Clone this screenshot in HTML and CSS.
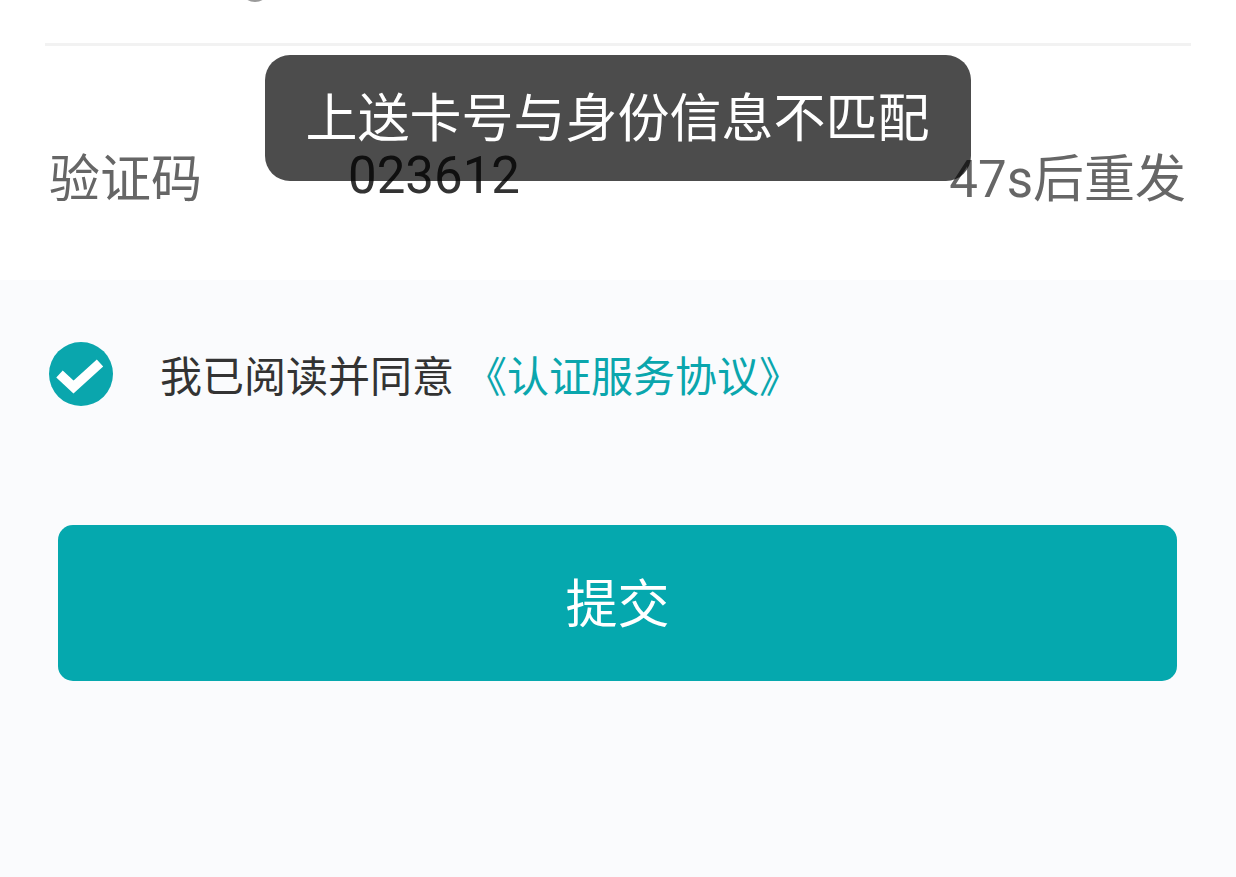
FILE: index.html
```html
<!DOCTYPE html>
<html lang="zh-CN">
<head>
  <meta charset="UTF-8">
  <meta name="viewport" content="width=device-width, initial-scale=1">
  <title>认证</title>
  <link rel="stylesheet" href="styles.css">
</head>
<body>
  <div class="top-box">
    <!-- Row above, scrolled almost out of view -->
    <div class="prev-row"><span class="prev-mark"></span></div>
    <div class="code-row">
      <span class="code-label">验证码</span>
      <span class="code-value">023612</span>
      <span class="code-timer">47s后重发</span>
    </div>
  </div>

  <div class="bottom-box">
    <div class="agree-row">
      <svg class="check-icon" viewBox="0 0 64 64" width="64" height="64">
        <circle cx="32" cy="32" r="32" fill="#0aa6ad"/>
        <path d="M10.5 32 L24.5 45 L51 21" fill="none" stroke="#fff" stroke-width="9.5"/>
      </svg>
      <span class="agree-text">我已阅读并同意</span>
      <span class="agree-link">《认证服务协议》</span>
    </div>
    <button type="button" class="submit-btn">提交</button>
  </div>

  <div class="toast">上送卡号与身份信息不匹配</div>
</body>
</html>
```

FILE: styles.css
```css
* { box-sizing: border-box; }

body {
  margin: 0;
  height: 877px;
  overflow: hidden;
  font-family: Roboto, "Noto Sans CJK SC", sans-serif;
  background: #fafbfd;
  position: relative;
}

.top-box {
  height: 280px;
  background: #fff;
  padding: 0 45px;
}

.prev-row {
  height: 46px;
  border-bottom: 3px solid #f2f2f2;
  padding-left: 195px;
  overflow: hidden;
}

.prev-mark {
  display: block;
  width: 30px;
  height: 30px;
  margin-top: -28px;
  border-radius: 50%;
  background: #9a9a9a;
}

.code-row {
  display: flex;
  align-items: center;
  height: 66px;
  margin-top: 96px;
  padding: 0 5px 0 4px;
}

.code-label {
  width: 299px;
  font-size: 51px;
  color: #666;
}

.code-value {
  flex: 1;
  font-size: 51px;
  color: #333;
}

.code-timer {
  font-size: 51px;
  color: #666;
}

.bottom-box {
  padding: 60px 58px 0;
}

.agree-row {
  display: flex;
  align-items: center;
  margin-left: -9px;
  height: 66px;
}

.check-icon {
  margin: 2px 47px 0 0;
}

.agree-text {
  font-size: 42px;
  color: #333;
}

.agree-link {
  font-size: 42px;
  color: #0aa6ad;
  margin-left: 11px;
}

.submit-btn {
  display: block;
  width: 1119px;
  height: 156px;
  margin-top: 119px;
  padding: 0 0 6px;
  border: none;
  border-radius: 15px;
  background: #05a8ae;
  color: #fff;
  font-family: inherit;
  font-size: 52px;
}

.toast {
  position: absolute;
  top: 55px;
  left: 265px;
  width: 706px;
  height: 126px;
  padding-right: 1px;
  line-height: 130px;
  text-align: center;
  border-radius: 25px;
  background: rgba(0, 0, 0, 0.7);
  color: #fff;
  font-size: 52px;
}
```
